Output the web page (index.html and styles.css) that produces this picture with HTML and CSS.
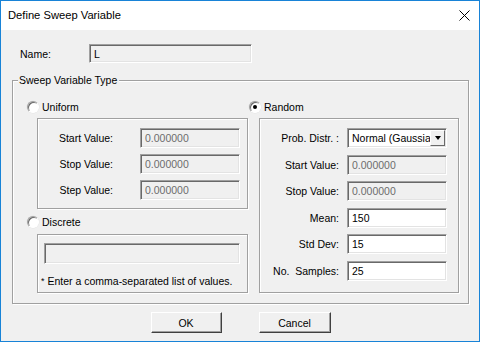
FILE: index.html
```html
<!DOCTYPE html>
<html lang="en">
<head>
    <meta charset="UTF-8" />
    <meta name="viewport" content="width=device-width, initial-scale=1.0" />
    <title>Define Sweep Variable</title>
    <link rel="stylesheet" href="styles.css">
</head>
<body>
<div class="window">
    <div class="titlebar">
        <span class="title">Define Sweep Variable</span>
        <svg class="close" width="11" height="11" viewBox="0 0 11 11">
            <path d="M0.5 0.5 L10.5 10.5 M10.5 0.5 L0.5 10.5" stroke="#000" stroke-width="1" fill="none" />
        </svg>
    </div>

    <div class="content">
        <div class="name-row">
            <span class="name-label">Name:</span>
            <div class="field name-field">L</div>
        </div>

        <div class="group">
            <span class="legend">Sweep Variable Type</span>
            <div class="columns">
                <div class="column">
                    <div class="radio-row"><span class="radio"></span>Uniform</div>
                    <div class="box uniform">
                        <span class="lbl">Start Value:</span><div class="field disabled">0.000000</div>
                        <span class="lbl">Stop Value:</span><div class="field disabled">0.000000</div>
                        <span class="lbl">Step Value:</span><div class="field disabled">0.000000</div>
                    </div>
                    <div class="radio-row discrete-row"><span class="radio"></span>Discrete</div>
                    <div class="box discrete">
                        <div class="field disabled list-field"></div>
                        <div class="note"><span class="star">*</span> Enter a comma-separated list of values.</div>
                    </div>
                </div>

                <div class="column">
                    <div class="radio-row"><span class="radio checked"></span>Random</div>
                    <div class="box random">
                        <span class="lbl">Prob. Distr. :</span>
                        <div class="field combo">
                            <span class="combo-text">Normal (Gaussian)</span>
                            <span class="combo-btn"></span>
                        </div>
                        <span class="lbl">Start Value:</span><div class="field disabled">0.000000</div>
                        <span class="lbl">Stop Value:</span><div class="field disabled">0.000000</div>
                        <span class="lbl">Mean:</span><div class="field">150</div>
                        <span class="lbl">Std Dev:</span><div class="field">15</div>
                        <span class="lbl">No.&nbsp; Samples:</span><div class="field">25</div>
                    </div>
                </div>
            </div>
        </div>

        <div class="buttons">
            <div class="button default">OK</div>
            <div class="button cancel">Cancel</div>
        </div>
    </div>
</div>
</body>
</html>
```

FILE: styles.css
```css
body {
    margin: 0;
    font-family: "Liberation Sans", Arial, sans-serif;
    font-size: 10.5px;
    color: #000;
}

.window {
    width: 480px;
    height: 342px;
    box-sizing: border-box;
    border: 1px solid #1883d7;
    background-color: #f0f0f0;
    display: flex;
    flex-direction: column;
}

.titlebar {
    height: 29px;
    flex-shrink: 0;
    background-color: #fff;
    display: flex;
    align-items: center;
    justify-content: space-between;
    padding: 0 9px 1px 7px;
    box-sizing: border-box;
}

.title {
    font-size: 11.2px;
}

.close {
    display: block;
}

.content {
    padding: 14px 10px 0 11px;
    display: flex;
    flex-direction: column;
}

.name-row {
    display: flex;
    align-items: center;
    height: 19px;
    padding-left: 8px;
}

.name-label {
    width: 69px;
}

.field {
    height: 20px;
    box-sizing: border-box;
    background-color: #fff;
    border-top: 1px solid #a0a0a0;
    border-left: 1px solid #a0a0a0;
    border-right: 1px solid #fff;
    border-bottom: 1px solid #fff;
    box-shadow: inset 1px 1px 0 #696969, inset -1px -1px 0 #e3e3e3;
    padding: 0 4px;
    display: flex;
    align-items: center;
    white-space: nowrap;
    overflow: hidden;
}

.name-field {
    width: 163px;
    height: 19px;
    background-color: #f0f0f0;
}

.disabled {
    background-color: #f0f0f0;
    color: #6d6d6d;
}

.group {
    margin-top: 17px;
    width: 457px;
    height: 224px;
    box-sizing: border-box;
    border: 1px solid #a0a0a0;
    box-shadow: inset 1px 1px 0 #fff, 1px 1px 0 #fff;
    display: flex;
    flex-direction: column;
}

.legend {
    align-self: flex-start;
    margin: -7px 0 0 5px;
    padding: 0 2px 0 1px;
    line-height: 13px;
    background-color: #f0f0f0;
}

.columns {
    display: grid;
    grid-template-columns: 211px 200px;
    column-gap: 11px;
    padding: 0 9px 0 24px;
}

.column {
    display: flex;
    flex-direction: column;
}

.radio-row {
    display: flex;
    align-items: center;
    height: 13px;
    margin: 13px 0 5px -10px;
    gap: 3px;
}

.discrete-row {
    margin: 6px 0 6px -10px;
}

.radio {
    width: 12px;
    height: 12px;
    box-sizing: border-box;
    border-radius: 50%;
    background-color: #fff;
    border: 1px solid;
    border-color: #a0a0a0 #fff #fff #a0a0a0;
    box-shadow: inset 1px 1px 0 #696969, 0 0 0 0.5px #e3e3e3;
    display: flex;
    align-items: center;
    justify-content: center;
}

.radio.checked::after {
    content: "";
    width: 4px;
    height: 4px;
    border-radius: 50%;
    background-color: #000;
}

.box {
    box-sizing: border-box;
    border: 1px solid #a0a0a0;
    box-shadow: inset 1px 1px 0 #fff, 1px 1px 0 #fff;
}

.uniform {
    display: grid;
    grid-template-columns: 75px 100px;
    column-gap: 27px;
    row-gap: 6px;
    align-items: center;
    padding: 9px 0 8px 0;
}

.random {
    flex: 1;
    display: grid;
    grid-template-columns: 79px 100px;
    grid-auto-rows: 20px;
    column-gap: 8px;
    row-gap: 6.6px;
    align-items: center;
    align-content: start;
    padding: 9px 0 10px 0;
}

.lbl {
    text-align: right;
    white-space: nowrap;
}

.discrete {
    height: 59px;
    padding: 8px 0 0 3px;
}

.list-field {
    width: 196px;
    height: 21px;
    margin-left: 3px;
}

.note {
    margin-top: 11px;
    line-height: 13px;
    white-space: nowrap;
}

.star {
    font-size: 9px;
    vertical-align: 1px;
}

.combo {
    padding: 0 1px 0 4px;
    justify-content: space-between;
}

.combo-text {
    overflow: hidden;
    white-space: nowrap;
    flex: 1;
}

.combo-btn {
    width: 15px;
    height: 16px;
    flex-shrink: 0;
    box-sizing: border-box;
    background-color: #f0f0f0;
    border-top: 1px solid #fff;
    border-left: 1px solid #fff;
    border-right: 1px solid #696969;
    border-bottom: 1px solid #696969;
    display: flex;
    align-items: center;
    justify-content: center;
}

.combo-btn::after {
    content: "";
    border-left: 3.5px solid transparent;
    border-right: 3.5px solid transparent;
    border-top: 4px solid #000;
}

.buttons {
    display: flex;
    justify-content: center;
    gap: 37px;
    margin-top: 8px;
}

.button {
    width: 71px;
    height: 21px;
    box-sizing: border-box;
    background-color: #f0f0f0;
    border-top: 1px solid #fff;
    border-left: 1px solid #fff;
    border-right: 1px solid #404040;
    border-bottom: 1px solid #404040;
    box-shadow: inset -1px -1px 0 #a0a0a0;
    display: flex;
    align-items: center;
    justify-content: center;
}

.cancel {
    width: 72px;
}
```
